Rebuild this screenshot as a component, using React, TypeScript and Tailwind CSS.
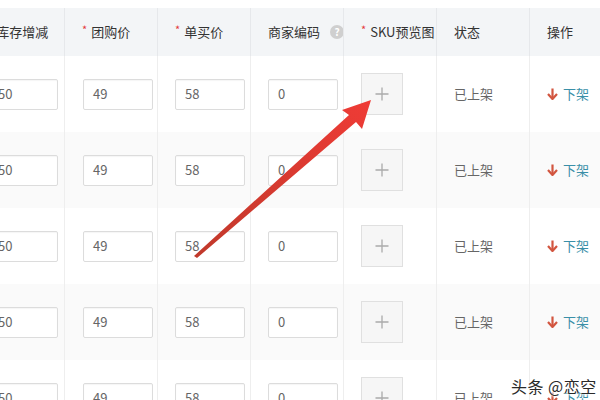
import React from "react";

const cols = [
  { label: "库存增减", star: true },
  { label: "团购价", star: true },
  { label: "单买价", star: true },
  { label: "商家编码", star: false, help: true },
  { label: "SKU预览图", star: true },
  { label: "状态", star: false },
  { label: "操作", star: false },
];

const rows = [0, 1, 2, 3, 4];

function Input({ v }: { v: string }) {
  return (
    <div className="w-[70px] h-[31px] border border-[#dcdcdc] rounded-[2px] bg-white flex items-center pl-[9px] text-[13px] text-[#666] shadow-[inset_0_1px_1px_rgba(0,0,0,0.04)]">
      {v}
    </div>
  );
}

function Plus() {
  return (
    <div className="w-[42px] h-[42px] border border-[#e0e0e0] bg-[#f6f6f6] flex items-center justify-center">
      <svg width="14" height="14" viewBox="0 0 14 14">
        <path d="M7 0.5V13.5M0.5 7H13.5" stroke="#aaa" strokeWidth="1.3" />
      </svg>
    </div>
  );
}

export default function App() {
  const font = { fontFamily: '"Noto Sans CJK SC", "Noto Sans", sans-serif' };
  return (
    <div className="relative w-[600px] h-[400px] overflow-hidden bg-white" style={font}>
      <div className="ml-[-30px] pt-[8px]">
        <div className="grid grid-cols-[94px_93px_93px_93px_93px_93px_93px_93px] h-[48px] bg-[#f3f5f7]">
          {cols.map((c, i) => (
            <div key={i} className="border-l border-[#e6e8eb] first:border-l-0 flex items-center pl-[17px] text-[13px] text-[#333] whitespace-nowrap">
              {c.star && <span className="text-[#e4393c] text-[11px] mr-[4px] -mt-[6px]">*</span>}
              <span>{c.label}</span>
              {c.help && (
                <span className="ml-[10px] shrink-0 w-[14px] h-[14px] rounded-full bg-[#cfcfcf] text-white text-[10px] font-bold flex items-center justify-center leading-none">
                  ?
                </span>
              )}
            </div>
          ))}
          <div />
        </div>
        {rows.map((r) => (
          <div
            key={r}
            className={`grid grid-cols-[94px_93px_93px_93px_93px_93px_93px_93px] h-[76px] ${r % 2 === 1 ? "bg-[#fafafa]" : "bg-white"}`}
          >
            <div className="flex items-center pl-[18px]"><Input v="50" /></div>
            <div className="border-l border-[#eeeeee] flex items-center pl-[18px]"><Input v="49" /></div>
            <div className="border-l border-[#eeeeee] flex items-center pl-[17px]"><Input v="58" /></div>
            <div className="border-l border-[#eeeeee] flex items-center pl-[17px]"><Input v="0" /></div>
            <div className="border-l border-[#eeeeee] flex items-center pl-[17px]"><Plus /></div>
            <div className="border-l border-[#eeeeee] flex items-center pl-[17px] text-[13px] text-[#666]">已上架</div>
            <div className="border-l border-[#eeeeee] flex items-center pl-[17px] text-[13px] text-[#3a8fa8]">
              <svg width="11" height="12" viewBox="0 0 11 12" className="mr-[5px]">
                <path d="M5.5 0.5V10" stroke="#d2553f" strokeWidth="2.2" />
                <path d="M1 6L5.5 11L10 6" stroke="#d2553f" strokeWidth="2.2" fill="none" strokeLinejoin="round" />
              </svg>
              下架
            </div>
            <div />
          </div>
        ))}
      </div>

      <svg className="absolute left-0 top-0" width="600" height="400" viewBox="0 0 600 400">
        <defs>
          <linearGradient id="ag" x1="0" y1="1" x2="1" y2="0">
            <stop offset="0" stopColor="#c0392b" />
            <stop offset="1" stopColor="#ef3b36" />
          </linearGradient>
        </defs>
        <polygon
          points="194,256 349,115 342,110 371,100 362,129 356,122 197,258"
          fill="url(#ag)"
        />
      </svg>

      <div
        className="absolute left-[511px] top-[374px] text-[16px] text-[#2a2a2a] tracking-[0.5px]"
        style={{ textShadow: "0 0 2px #fff, 0 0 2px #fff, 0 0 3px #fff" }}
      >
        头条 @恋空
      </div>
    </div>
  );
}
